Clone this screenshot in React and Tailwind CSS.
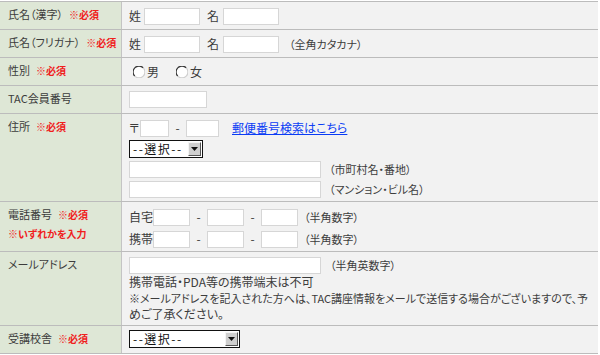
import React from 'react';

const font = "font-['Noto_Sans_CJK_JP','Noto_Sans',sans-serif] [font-feature-settings:'palt']";

const Req = ({ children = '※必須' }) => (
  <span className="ml-[6px] text-[10px] font-bold text-[#f0201c]">{children}</span>
);

const Box = ({ w }) => (
  <div className={`h-[17px] ${w} shrink-0 border border-[#d6d6d6] bg-white`} />
);

const Hint = ({ children, ml = 'ml-[8px]' }) => <span className={`${ml} text-[11px]`}>{children}</span>;

const Select = ({ w }) => (
  <div className={`flex h-[18px] ${w} items-center border border-[#111] bg-white pr-px`}>
    <span className="flex-1 whitespace-nowrap pl-[3px] text-[12px] leading-none tracking-[1.5px] text-[#111]">--選択--</span>
    <span className="flex h-[14px] w-[13px] items-center justify-center border border-b-[#555] border-l-[#f4f4f4] border-r-[#555] border-t-[#f4f4f4] bg-[#cfcfcf]">
      <svg width="7" height="4" viewBox="0 0 7 4">
        <path d="M0 0h7L3.5 4z" fill="#111" />
      </svg>
    </span>
  </div>
);

const Radio = () => (
  <svg width="12" height="12" viewBox="0 0 12 12" className="shrink-0">
    <circle cx="6" cy="6" r="5.5" fill="#fff" />
    <path d="M1.8 10.2A5.5 5.5 0 0 1 10.2 1.8" stroke="#3a3a3a" strokeWidth="1.2" fill="none" />
    <path d="M10.2 1.8A5.5 5.5 0 0 1 1.8 10.2" stroke="#d0d0d0" strokeWidth="1.2" fill="none" />
  </svg>
);

const Row = ({ h, label, children, pt = 'pt-[5px]' }) => (
  <div className={`grid ${h} grid-cols-[121px_1fr] border-t border-[#bcbcbc]`}>
    <div className="whitespace-nowrap bg-[#dee7d6] pl-[8px] pt-[3px] text-[11px] leading-[18px]">{label}</div>
    <div className={`whitespace-nowrap border-l border-[#c4c4c4] bg-[#f2f2f2] pl-[7px] ${pt}`}>{children}</div>
  </div>
);

const Dash = () => <span className="w-[17px] text-center">-</span>;

export default function App() {
  return (
    <div className={`h-[355px] w-[600px] bg-white pt-px text-[12px] text-[#3c3c3c] ${font}`}>
      <div className="w-[598px] border-b border-[#bcbcbc]">
        <Row h="h-[28px]" label={<>氏名（漢字）<Req /></>}>
          <div className="flex items-center">
            <span className="w-[15px]">姓</span>
            <Box w="w-[56px]" />
            <span className="ml-[7px] w-[16px]">名</span>
            <Box w="w-[56px]" />
          </div>
        </Row>
        <Row h="h-[28px]" label={<>氏名（フリガナ）<Req /></>}>
          <div className="flex items-center">
            <span className="w-[15px]">姓</span>
            <Box w="w-[56px]" />
            <span className="ml-[7px] w-[16px]">名</span>
            <Box w="w-[56px]" />
            <Hint ml="ml-[10px]">（全角カタカナ）</Hint>
          </div>
        </Row>
        <Row h="h-[28px]" pt="pt-[6px]" label={<>性別<Req /></>}>
          <div className="flex items-center pl-[4px] leading-[16px]">
            <Radio />
            <span className="ml-[2px]">男</span>
            <span className="ml-[17px]"><Radio /></span>
            <span className="ml-[2px]">女</span>
          </div>
        </Row>
        <Row h="h-[28px]" label="TAC会員番号">
          <Box w="w-[78px]" />
        </Row>
        <Row h="h-[88px]" label={<>住所<Req /></>}>
          <div className="flex flex-col gap-[3px]">
            <div className="flex items-center">
              <span className="w-[11px]">〒</span>
              <Box w="w-[29px]" />
              <Dash />
              <Box w="w-[33px]" />
              <a href="#" className="ml-[13px] text-[#0a3cf5] underline">郵便番号検索はこちら</a>
            </div>
            <Select w="w-[74px]" />
            <div className="flex items-center">
              <Box w="w-[192px]" />
              <Hint>（市町村名・番地）</Hint>
            </div>
            <div className="flex items-center">
              <Box w="w-[192px]" />
              <Hint>（マンション・ビル名）</Hint>
            </div>
          </div>
        </Row>
        <Row
          h="h-[50px]"
          pt="pt-[6px]"
          label={
            <>
              電話番号<Req />
              <br />
              <span className="text-[10px] font-bold text-[#f0201c]">※いずれかを入力</span>
            </>
          }
        >
          <div className="flex flex-col gap-[4px]">
            {['自宅', '携帯'].map(t => (
              <div key={t} className="flex items-center">
                <span className="shrink-0">{t}</span>
                <Box w="w-[37px]" />
                <Dash />
                <Box w="w-[37px]" />
                <Dash />
                <Box w="w-[37px]" />
                <Hint ml="ml-[6px]">（半角数字）</Hint>
              </div>
            ))}
          </div>
        </Row>
        <Row h="h-[74px]" label="メールアドレス">
          <div className="flex items-center">
            <Box w="w-[192px]" />
            <Hint ml="ml-[9px]">（半角英数字）</Hint>
          </div>
          <div className="leading-[16px]">
            <p>携帯電話・PDA等の携帯端末は不可</p>
            <p className="text-[11px]">※メールアドレスを記入された方へは、TAC講座情報をメールで送信する場合がございますので、予</p>
            <p>めご了承ください。</p>
          </div>
        </Row>
        <Row h="h-[28px]" pt="pt-[4px]" label={<>受講校舎<Req /></>}>
          <Select w="w-[111px]" />
        </Row>
      </div>
    </div>
  );
}
